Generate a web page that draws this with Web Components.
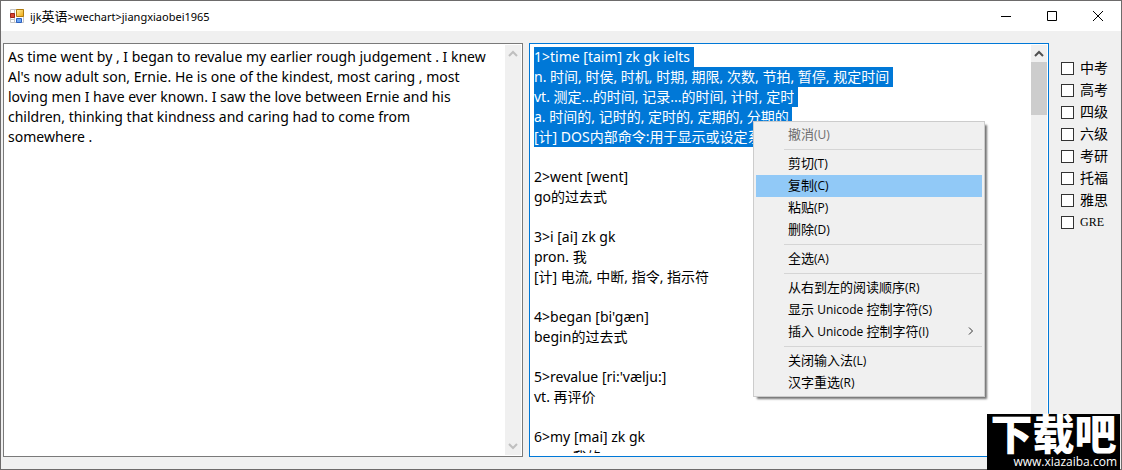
<!DOCTYPE html>
<html lang="zh-CN">
<head>
<meta charset="utf-8">
<title>ijk英语</title>
<style>
  html, body {
    height: 100%;
    margin: 0;
  }

  body {
    font: 14px/20px "Noto Sans", "Noto Sans CJK SC", sans-serif;
    color: #000;
    overflow: hidden;
  }

  small {
    font-size: 12px;
  }

  title-bar small {
    font-size: 11px;
  }

  context-menu {
    font-family: "Open Sans", "Noto Sans CJK SC", sans-serif;
  }
</style>
</head>
<body>
<app-window>
  <title-bar slot="title"><small>ijk</small>英语<small>&gt;wechart&gt;jiangxiaobei1965</small></title-bar>

  <text-pane label="原文">As time went by , I began to revalue my earlier rough judgement . I knew Al's now adult son, Ernie. He is one of the kindest, most caring , most loving men I have ever known. I saw the love between Ernie and his children, thinking that kindness and caring had to come from somewhere .</text-pane>

  <text-pane label="词汇" scrollable selected-lines="5">1>time [taim] zk gk ielts
n. 时间, 时侯, 时机, 时期, 期限, 次数, 节拍, 暂停, 规定时间
vt. 测定...的时间, 记录...的时间, 计时, 定时
a. 时间的, 记时的, 定时的, 定期的, 分期的
[计] DOS内部命令:用于显示或设定系统时间

2>went [went]
go的过去式

3>i [ai] zk gk
pron. 我
[计] 电流, 中断, 指令, 指示符

4>began [bi'gæn]
begin的过去式

5>revalue [ri:'vælju:]
vt. 再评价

6>my [mai] zk gk
pron. 我的</text-pane>

  <level-list slot="side">
    <level-option>中考</level-option>
    <level-option>高考</level-option>
    <level-option>四级</level-option>
    <level-option>六级</level-option>
    <level-option>考研</level-option>
    <level-option>托福</level-option>
    <level-option>雅思</level-option>
    <level-option latin>GRE</level-option>
  </level-list>
</app-window>

<context-menu>
  <menu-item disabled>撤消<small>(U)</small></menu-item>
  <menu-line></menu-line>
  <menu-item>剪切<small>(T)</small></menu-item>
  <menu-item active>复制<small>(C)</small></menu-item>
  <menu-item>粘贴<small>(P)</small></menu-item>
  <menu-item>删除<small>(D)</small></menu-item>
  <menu-line></menu-line>
  <menu-item>全选<small>(A)</small></menu-item>
  <menu-line></menu-line>
  <menu-item>从右到左的阅读顺序<small>(R)</small></menu-item>
  <menu-item>显示<small> Unicode </small>控制字符<small>(S)</small></menu-item>
  <menu-item submenu>插入<small> Unicode </small>控制字符<small>(I)</small></menu-item>
  <menu-line></menu-line>
  <menu-item>关闭输入法<small>(L)</small></menu-item>
  <menu-item>汉字重选<small>(R)</small></menu-item>
</context-menu>

<site-mark>
  下载吧
  <span slot="url">www.xiazaiba.com</span>
</site-mark>

<script>
(function() {
  class AppWindow extends HTMLElement {
    constructor() {
      super();
      this.attachShadow({ mode: 'open' });
      this.shadowRoot.innerHTML = `
        <style>
          :host {
            display: flex;
            flex-direction: column;
            box-sizing: border-box;
            height: 100%;
            border: 1px solid #6d6b6b;
            background: #f0f0f0;
          }

          main {
            flex: 1;
            min-height: 0;
            display: grid;
            grid-template-columns: 1fr 1fr 66px;
            grid-template-rows: minmax(0, 1fr);
            gap: 6px;
            padding: 12px 0 12px 2px;
          }
        </style>
        <slot name="title"></slot>
        <main>
          <slot></slot>
          <slot name="side"></slot>
        </main>
      `;
    }
  }

  class TitleBar extends HTMLElement {
    constructor() {
      super();
      this.attachShadow({ mode: 'open' });
      this.shadowRoot.innerHTML = `
        <style>
          :host {
            display: flex;
            align-items: stretch;
            height: 30px;
            padding-left: 9px;
            background: #fff;
            font-size: 13px;
          }

          .icon {
            align-self: center;
            margin-right: 6px;
          }

          .caption {
            flex: 1;
            align-self: center;
            white-space: nowrap;
          }

          button {
            width: 46px;
            padding: 0;
            border: 0;
            background: none;
            display: grid;
            place-items: center;
          }
        </style>
        <svg class="icon" width="14" height="14" viewBox="0 0 14 14">
          <defs>
            <linearGradient id="gold" x1="0" y1="0" x2="1" y2="1">
              <stop offset="0" stop-color="#fff3a8"/><stop offset="1" stop-color="#eea60c"/>
            </linearGradient>
          </defs>
          <path d="M.5.5h13v13H.5z" fill="#fff" stroke="#c4c4c4"/>
          <path d="M4.5 1v12M1 4.500h4M1 10.500h4" stroke="#c4c4c4"/>
          <path d="M6.500 .5h7v7h-7z" fill="url(#gold)" stroke="#b17b0c"/>
          <path d="M.5 4.500h4v4h-4z" fill="#d8452f" stroke="#9b2117"/>
          <path d="M6.500 9.500h5v4h-5z" fill="#6aa5f2" stroke="#2c60c0"/>
        </svg>
        <span class="caption"><slot></slot></span>
        <button aria-label="最小化">
          <svg width="10" height="10"><path d="M0 5.500h10" stroke="#000"/></svg>
        </button>
        <button aria-label="最大化">
          <svg width="10" height="10"><path d="M.5.5h9v9h-9z" fill="none" stroke="#000"/></svg>
        </button>
        <button aria-label="关闭">
          <svg width="10" height="10"><path d="M0 0l10 10M10 0L0 10" stroke="#000"/></svg>
        </button>
      `;
    }
  }

  class TextPane extends HTMLElement {
    constructor() {
      super();
      this.attachShadow({ mode: 'open' });
      this.shadowRoot.innerHTML = `
        <style>
          :host {
            display: flex;
            min-width: 0;
            padding: 1px;
            border: 1px solid #7a7a7a;
            background: #fff;
          }

          :host(:focus-within) {
            border-color: #0078d7;
          }

          textarea {
            flex: 1;
            min-width: 0;
            margin: 0 0 2px;
            padding: 2px 16px 0 3px;
            border: 0;
            outline: 0;
            resize: none;
            background: none;
            color: inherit;
            font: inherit;
            overflow: auto;
            scrollbar-width: none;
          }

          textarea::selection {
            background: #0078d7;
            color: #fff;
          }
        </style>
        <textarea spellcheck="false"></textarea>
        <scroll-track></scroll-track>
      `;
    }

    connectedCallback() {
      const area = this.shadowRoot.querySelector('textarea');
      area.setAttribute('aria-label', this.getAttribute('label'));
      area.value = this.textContent;

      if (this.hasAttribute('scrollable')) {
        this.shadowRoot.querySelector('scroll-track').setAttribute('enabled', '');
      }

      const lines = Number(this.getAttribute('selected-lines'));
      if (lines) {
        const end = area.value.split('\n').slice(0, lines).join('\n').length;
        area.focus();
        area.setSelectionRange(0, end);
        area.scrollTop = 0;
      }
    }
  }

  class ScrollTrack extends HTMLElement {
    constructor() {
      super();
      this.attachShadow({ mode: 'open' });
      this.shadowRoot.innerHTML = `
        <style>
          :host {
            display: flex;
            flex-direction: column;
            width: 16px;
            background: #f0f0f0;
            color: #bfbfbf;
          }

          :host([enabled]) {
            color: #505050;
          }

          svg {
            flex: none;
            width: 16px;
            height: 17px;
          }

          .rail {
            flex: 1;
          }

          .thumb {
            display: none;
            height: 14%;
            background: #cdcdcd;
          }

          :host([enabled]) .thumb {
            display: block;
          }
        </style>
        <svg><path d="M4 11l4-4 4 4" fill="none" stroke="currentColor" stroke-width="2"/></svg>
        <div class="rail"><div class="thumb"></div></div>
        <svg><path d="M4 6l4 4 4-4" fill="none" stroke="currentColor" stroke-width="2"/></svg>
      `;
    }
  }

  class LevelList extends HTMLElement {
    constructor() {
      super();
      this.attachShadow({ mode: 'open' });
      this.shadowRoot.innerHTML = `
        <style>
          :host {
            display: flex;
            flex-direction: column;
            padding: 14px 0 0 6px;
          }
        </style>
        <slot></slot>
      `;
    }
  }

  class LevelOption extends HTMLElement {
    constructor() {
      super();
      this.attachShadow({ mode: 'open' });
      this.shadowRoot.innerHTML = `
        <style>
          :host {
            display: block;
          }

          :host([latin]) {
            font-family: "Liberation Serif", serif;
            font-size: 12px;
          }

          label {
            display: flex;
            align-items: center;
            gap: 6px;
            height: 22px;
          }

          input {
            appearance: none;
            width: 13px;
            height: 13px;
            margin: 0;
            border: 1px solid #333;
            background: #fff;
          }

          input:checked {
            background: #0078d7;
          }
        </style>
        <label><input type="checkbox"><slot></slot></label>
      `;
    }
  }

  class ContextMenu extends HTMLElement {
    constructor() {
      super();
      this.attachShadow({ mode: 'open' });
      this.shadowRoot.innerHTML = `
        <style>
          :host {
            position: absolute;
            left: 753px;
            top: 121px;
            box-sizing: border-box;
            width: 232px;
            padding: 2px;
            border: 1px solid #ccc;
            background: #f0f0f0;
            box-shadow: 3px 3px 2px -1px rgba(0, 0, 0, 0.55);
            font-size: 13px;
          }
        </style>
        <div role="menu"><slot></slot></div>
      `;
    }
  }

  class MenuItem extends HTMLElement {
    constructor() {
      super();
      this.attachShadow({ mode: 'open' });
      this.shadowRoot.innerHTML = `
        <style>
          :host {
            display: block;
          }

          button {
            display: flex;
            align-items: center;
            width: 100%;
            height: 22px;
            padding: 0 6px 2px 32px;
            border: 0;
            background: none;
            color: inherit;
            font: inherit;
            text-align: left;
          }

          :host([active]) button {
            background: #91c9f7;
          }

          :host([disabled]) {
            color: #6d6d6d;
          }

          span {
            flex: 1;
            white-space: pre;
          }

          svg {
            display: none;
          }

          :host([submenu]) svg {
            display: block;
          }
        </style>
        <button role="menuitem">
          <span><slot></slot></span>
          <svg width="8" height="8"><path d="M1 0.500l3.500 3.500L1 7.500" fill="none" stroke="#333"/></svg>
        </button>
      `;
    }

    connectedCallback() {
      this.shadowRoot.querySelector('button').disabled = this.hasAttribute('disabled');
    }
  }

  class MenuLine extends HTMLElement {
    constructor() {
      super();
      this.attachShadow({ mode: 'open' });
      this.shadowRoot.innerHTML = `
        <style>
          :host {
            display: block;
            padding: 3px 0 3px 28px;
          }

          div {
            height: 1px;
            background: #d5d5d5;
          }
        </style>
        <div role="separator"></div>
      `;
    }
  }

  class SiteMark extends HTMLElement {
    constructor() {
      super();
      this.attachShadow({ mode: 'open' });
      this.shadowRoot.innerHTML = `
        <style>
          :host {
            position: absolute;
            right: 2px;
            bottom: 0;
            width: 133px;
            height: 56px;
            background: #000;
            color: #fff;
            text-align: center;
            white-space: nowrap;
          }

          .name {
            font: 900 42px/36px "Noto Sans CJK SC", sans-serif;
          }

          .url {
            padding: 4px 3px 0 0;
            font-family: "Open Sans", sans-serif;
            font-size: 12px;
            line-height: 16px;
            text-align: right;
          }
        </style>
        <div class="name"><slot></slot></div>
        <div class="url"><slot name="url"></slot></div>
      `;
    }
  }

  customElements.define('app-window', AppWindow);
  customElements.define('title-bar', TitleBar);
  customElements.define('scroll-track', ScrollTrack);
  customElements.define('text-pane', TextPane);
  customElements.define('level-list', LevelList);
  customElements.define('level-option', LevelOption);
  customElements.define('context-menu', ContextMenu);
  customElements.define('menu-item', MenuItem);
  customElements.define('menu-line', MenuLine);
  customElements.define('site-mark', SiteMark);
})();
</script>
</body>
</html>
